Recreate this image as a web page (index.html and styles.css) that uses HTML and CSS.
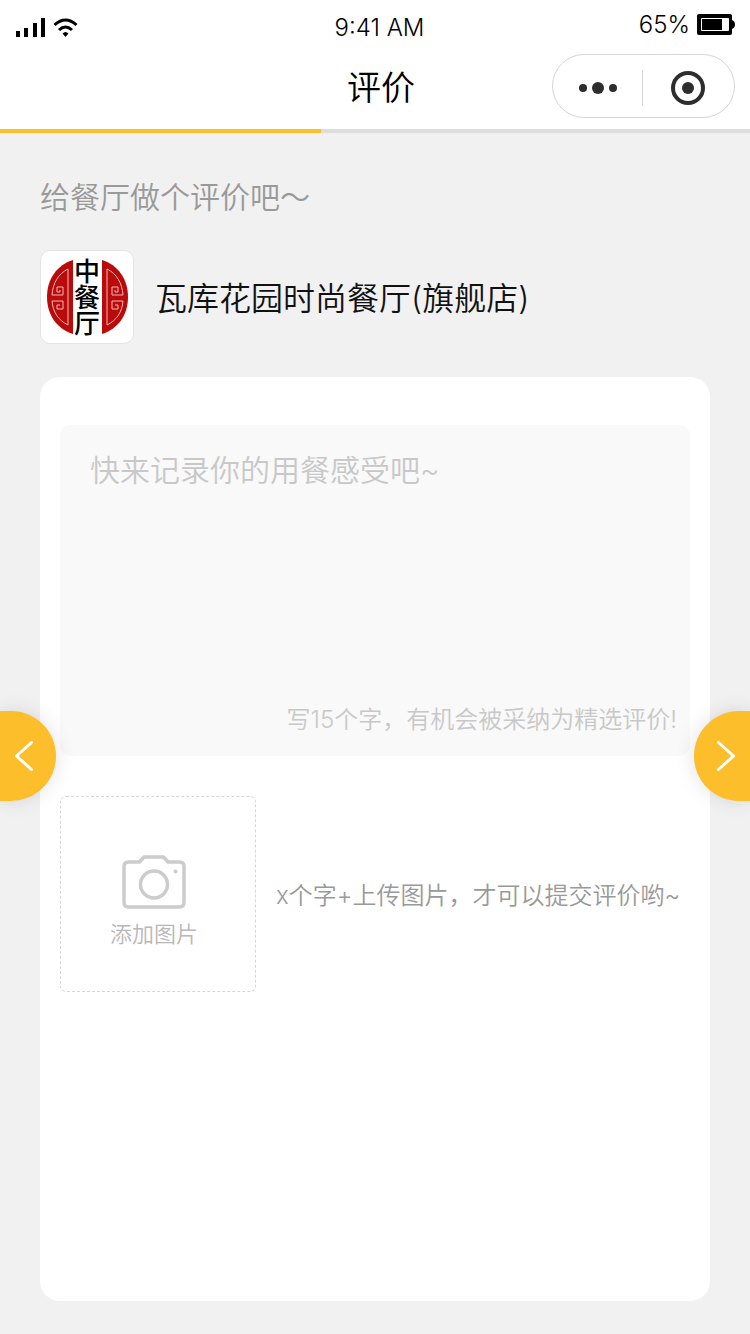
FILE: index.html
```html
<!DOCTYPE html>
<html lang="zh-CN">
<head>
<meta charset="utf-8">
<meta name="viewport" content="width=device-width, initial-scale=1">
<title>评价</title>
<link rel="stylesheet" href="styles.css">
</head>
<body>
<div class="page">
  <header class="header">
    <div class="status">
      <div class="status-left">
        <svg width="64" height="22" viewBox="0 0 64 22" aria-hidden="true">
          <path d="M0 15h4v6H0zM8 12h4v9H8zM17 7h4v14h-4zM25 2h4v19h-4z"/>
          <g fill="none" stroke="#000" stroke-width="3">
            <path d="M38.500 9Q49.500 -1 60.500 9"/>
            <path d="M43 14Q49.500 8 56 14"/>
          </g>
          <path d="M46.500 17.500q3-3 6 0l-3 3.500z"/>
        </svg>
      </div>
      <time class="time">9:41 AM</time>
      <div class="status-right">
        <span>65%</span>
        <svg width="38" height="21" viewBox="0 0 38 21" aria-hidden="true">
          <rect width="35" height="21" rx="2"/>
          <path d="M35 6q3 1 3 4.500T35 15z"/>
          <rect x="4" y="4" width="28" height="13" rx="1" fill="#fff"/>
          <rect x="5" y="5" width="20" height="11"/>
        </svg>
      </div>
    </div>
    <div class="nav">
      <h1 class="nav-title">评价</h1>
      <div class="capsule">
        <button class="capsule-btn" type="button" aria-label="更多">
          <svg width="40" height="14" viewBox="0 0 40 14" fill="#2d2d2d"><circle cx="5" cy="7" r="4"/><circle cx="20" cy="7" r="6"/><circle cx="35" cy="7" r="4"/></svg>
        </button>
        <span class="capsule-line"></span>
        <button class="capsule-btn" type="button" aria-label="关闭">
          <svg width="34" height="34" viewBox="0 0 34 34"><circle cx="17" cy="17" r="15" fill="none" stroke="#2d2d2d" stroke-width="4"/><circle cx="17" cy="17" r="6" fill="#2d2d2d"/></svg>
        </button>
      </div>
    </div>
    <div class="progress"><div class="progress-bar"></div></div>
  </header>

  <main class="main">
    <p class="lead">给餐厅做个评价吧～</p>
    <div class="shop">
      <svg class="shop-logo" viewBox="0 0 92 92" role="img" aria-label="中餐厅">
        <defs>
          <g id="half">
            <path d="M32 9C16 14 6 28 6 46s10 32 26 37z" fill="#b90a0c"/>
            <g fill="none" stroke="#efb9b0" stroke-width="1">
              <path d="M27 18V74C17 69 12 61 11 50H22V58H16V54H19M27 18C17 23 12 32 11 44H22V36H16V41H19V39"/>
            </g>
          </g>
        </defs>
        <use href="#half"/>
        <use href="#half" transform="matrix(-1 0 0 1 93 0)"/>
        <text class="logo-text" x="46" y="46">中餐厅</text>
      </svg>
      <h2 class="shop-name">瓦库花园时尚餐厅(旗舰店)</h2>
    </div>

    <form class="card">
      <div class="comment">
        <textarea class="comment-input" aria-label="用餐感受" placeholder="快来记录你的用餐感受吧~"></textarea>
        <p class="comment-hint">写15个字，有机会被采纳为精选评价!</p>
      </div>
      <div class="upload">
        <button class="upload-btn" type="button">
          <svg width="64" height="54" viewBox="0 0 64 54" fill="none" stroke="#ccc" stroke-width="3.500" stroke-linejoin="round" aria-hidden="true">
            <path d="M6.500 7H17.500L22 2H41.500L46 7H57.500Q62 7 62 11.500V47.500Q62 52 57.500 52H6.500Q2 52 2 47.500V11.500Q2 7 6.500 7Z"/>
            <circle cx="32" cy="29.500" r="13.500"/>
            <circle cx="53.500" cy="16.500" r="2" fill="#ccc" stroke="none"/>
          </svg>
          <span>添加图片</span>
        </button>
        <p class="upload-hint">x个字+上传图片，才可以提交评价哟~</p>
      </div>
    </form>
  </main>

  <button class="pager pager-prev" type="button" aria-label="上一页">
    <svg width="18" height="30" viewBox="0 0 18 30"><path d="M16.500 1.500L1.500 15L16.500 28.500"/></svg>
  </button>
  <button class="pager pager-next" type="button" aria-label="下一页">
    <svg width="18" height="30" viewBox="0 0 18 30"><path d="M1.500 1.500L16.500 15L1.500 28.500"/></svg>
  </button>
</div>
</body>
</html>
```
FILE: styles.css
```css
* {
  box-sizing: border-box;
  margin: 0;
  padding: 0;
}

body {
  background: #f1f1f1;
  color: #000;
  font-family: Inter, "Noto Sans CJK SC", sans-serif;
  font-weight: 350;
}

button,
textarea {
  border: 0;
  background: none;
  font: inherit;
  color: inherit;
}

svg {
  display: block;
}

.page {
  position: relative;
  display: flex;
  flex-direction: column;
  min-height: 100vh;
}

.header {
  background: #fff;
}

.status {
  display: grid;
  grid-template-columns: 1fr auto 1fr;
  align-items: center;
  height: 54px;
  padding: 0 15px 0 16px;
  font-size: 24px;
}

.time {
  padding-left: 8px;
}

.status-right {
  display: flex;
  align-items: center;
  justify-content: flex-end;
  gap: 7px;
  padding-bottom: 5px;
}

.nav {
  display: grid;
  grid-template-columns: 1fr auto 1fr;
  align-items: center;
  height: 75px;
  padding: 0 15px 11px 27px;
}

.nav-title {
  grid-column: 2;
  padding-top: 4px;
  font-size: 34px;
  font-weight: 350;
  line-height: 48px;
}

.capsule {
  display: flex;
  align-items: center;
  justify-self: end;
  width: 183px;
  height: 64px;
  padding: 3px 2px 0 0;
  border: 1px solid #d6d6d6;
  border-radius: 32px;
}

.capsule-btn {
  display: flex;
  flex: 1;
  align-items: center;
  justify-content: center;
  height: 100%;
}

.capsule-line {
  width: 1px;
  height: 36px;
  background: #d6d6d6;
}

.progress {
  height: 4px;
  background: #ddd;
}

.progress-bar {
  width: 42.8%;
  height: 100%;
  background: #fcbe2a;
}

.main {
  display: flex;
  flex: 1;
  flex-direction: column;
  padding: 43px 40px 33px;
}

.lead {
  color: #999;
  font-size: 30px;
  line-height: 42px;
}

.shop {
  display: flex;
  align-items: center;
  gap: 21px;
  margin: 32px 0 33px;
}

.shop-logo {
  flex: none;
  width: 94px;
  height: 94px;
  border: 1px solid #e4e4e4;
  border-radius: 10px;
  background: #fff;
}

.logo-text {
  font-family: "Noto Sans CJK SC", sans-serif;
  font-size: 26px;
  font-weight: 500;
  text-anchor: middle;
  writing-mode: vertical-rl;
}

.shop-name {
  padding-top: 3px;
  color: #111;
  font-size: 32px;
  font-weight: 350;
  line-height: 44px;
}

.card {
  flex: 1;
  padding: 48px 20px;
  border-radius: 20px;
  background: #fff;
}

.comment {
  display: flex;
  flex-direction: column;
  min-height: 331px;
  padding: 24px 13px 14px 30px;
  border-radius: 10px;
  background: #f9f9f9;
}

.comment-input {
  flex: 1;
  width: 100%;
  outline: 0;
  resize: none;
  color: #333;
  font-size: 30px;
  line-height: 42px;
}

.comment-input::placeholder {
  color: #c8c8c8;
}

.comment-hint {
  color: #c8c8c8;
  font-size: 24px;
  line-height: 44px;
  text-align: right;
}

.upload {
  display: flex;
  align-items: center;
  gap: 20px;
  margin-top: 40px;
}

.upload-btn {
  display: flex;
  flex: none;
  flex-direction: column;
  align-items: center;
  gap: 8px;
  width: 196px;
  height: 196px;
  padding: 58px 8px 0 0;
  border: 1px dashed #d6d6d6;
  border-radius: 6px;
  color: #b8b8b8;
  font-size: 22px;
  line-height: 34px;
}

.upload-hint {
  padding-top: 3px;
  color: #999;
  font-size: 24px;
  line-height: 34px;
}

.pager {
  position: absolute;
  top: 711px;
  display: flex;
  align-items: center;
  width: 56px;
  height: 90px;
  background: #fcbe2a;
  box-shadow: 0 0 20px rgba(0, 0, 0, 0.12);
}

.pager path {
  fill: none;
  stroke: #fff;
  stroke-width: 3;
  stroke-linecap: round;
  stroke-linejoin: round;
}

.pager-prev {
  left: 0;
  padding-left: 15px;
  border-radius: 0 45px 45px 0;
}

.pager-next {
  right: 0;
  justify-content: flex-end;
  padding-right: 15px;
  border-radius: 45px 0 0 45px;
}
```
